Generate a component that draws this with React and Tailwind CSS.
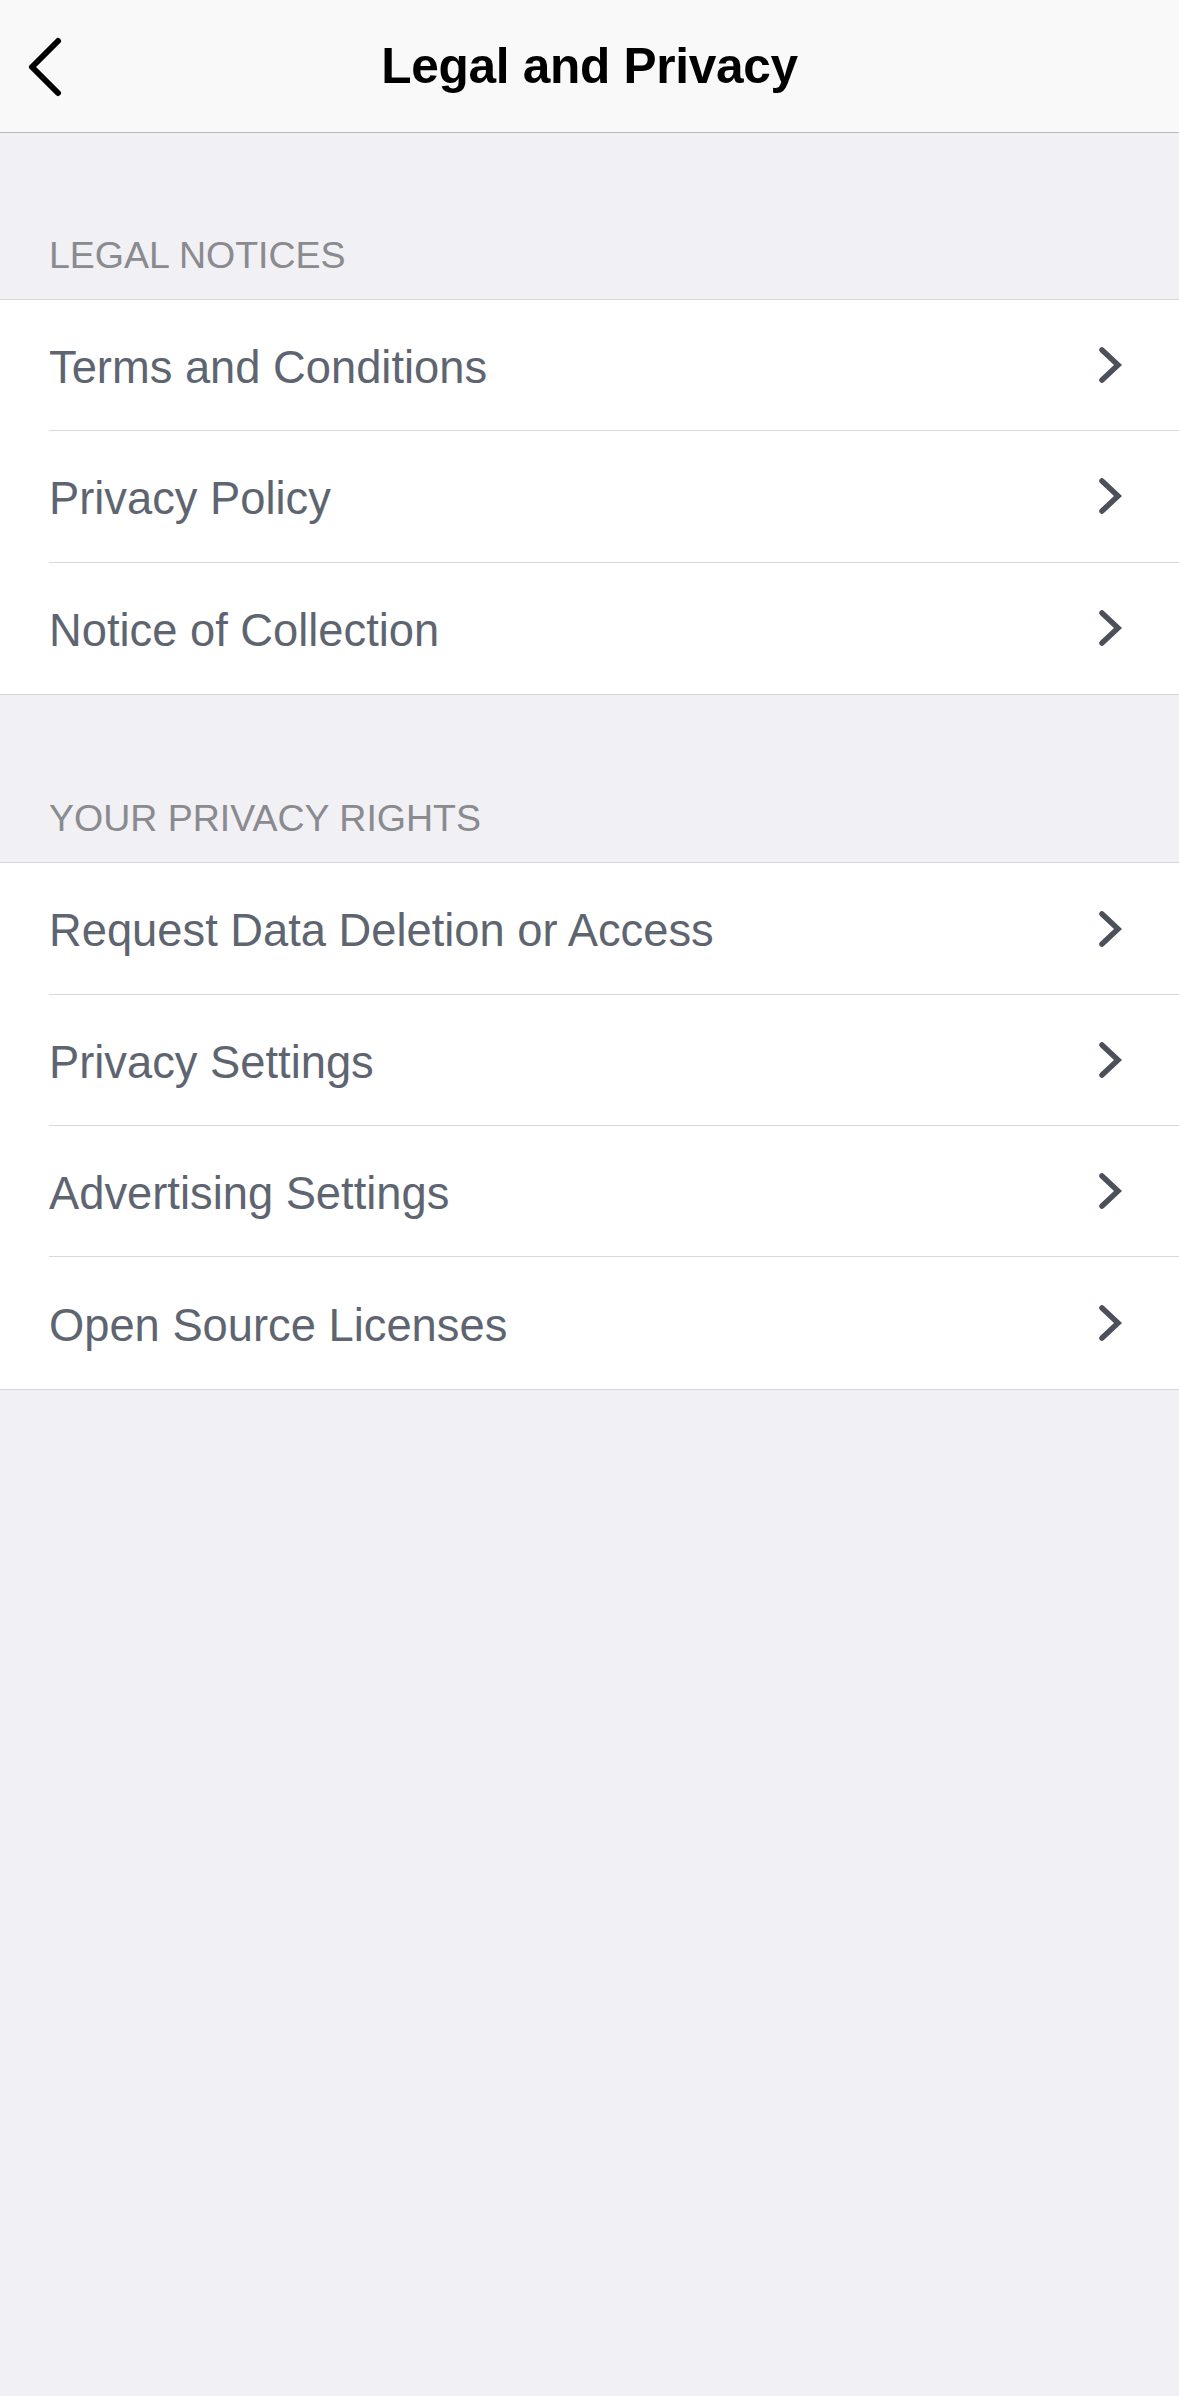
import React from "react";

const font = { fontFamily: '"Liberation Sans", Arial, sans-serif' };

function Chevron() {
  return (
    <svg width="28" height="40" viewBox="0 0 28 40" className="shrink-0">
      <polyline
        points="6,5 22,20 6,35"
        fill="none"
        stroke="#4b505a"
        strokeWidth="5.5"
        strokeLinecap="round"
        strokeLinejoin="miter"
      />
    </svg>
  );
}

function Row({ label, last }) {
  return (
    <div className="h-[131.3px] pl-[49px] bg-white">
      <div
        className={
          "h-full flex items-center justify-between pr-[55px] " +
          (last ? "" : "border-b border-[#d8d8dc]")
        }
      >
        <span className="text-[45.3px] leading-none text-[#5e6571] pt-[5px]">{label}</span>
        <Chevron />
      </div>
    </div>
  );
}

function Section({ title, items, tall }) {
  return (
    <div>
      <div
        className={
          (tall ? "h-[167.5px]" : "h-[166px]") + " flex items-end pb-[22px] pl-[49px]"
        }
      >
        <span className="text-[37.5px] leading-[44px] text-[#8a8a8f] uppercase">{title}</span>
      </div>
      <div className="border-t border-b border-[#d6d6da] bg-white">
        {items.map((it, i) => (
          <Row key={it} label={it} last={i === items.length - 1} />
        ))}
      </div>
    </div>
  );
}

export default function App() {
  return (
    <div className="w-[1179px] min-h-[2396px] bg-[#f0f0f5]" style={font}>
      <div className="h-[133px] bg-[#f9f9fa] border-b border-[#b9b9bc] flex items-center relative">
        <div className="pl-[24px] flex items-center pt-[2px]">
          <svg width="42" height="62" viewBox="0 0 42 62">
            <polyline
              points="34,5 8,31 34,57"
              fill="none"
              stroke="#000"
              strokeWidth="6"
              strokeLinecap="round"
              strokeLinejoin="round"
            />
          </svg>
        </div>
        <div className="absolute inset-0 flex items-center justify-center pointer-events-none">
          <span className="text-[49.6px] font-bold text-black tracking-[-0.3px]">Legal and Privacy</span>
        </div>
      </div>
      <Section
        title="Legal Notices"
        items={["Terms and Conditions", "Privacy Policy", "Notice of Collection"]}
      />
      <Section
        tall
        title="Your Privacy Rights"
        items={[
          "Request Data Deletion or Access",
          "Privacy Settings",
          "Advertising Settings",
          "Open Source Licenses",
        ]}
      />
    </div>
  );
}
